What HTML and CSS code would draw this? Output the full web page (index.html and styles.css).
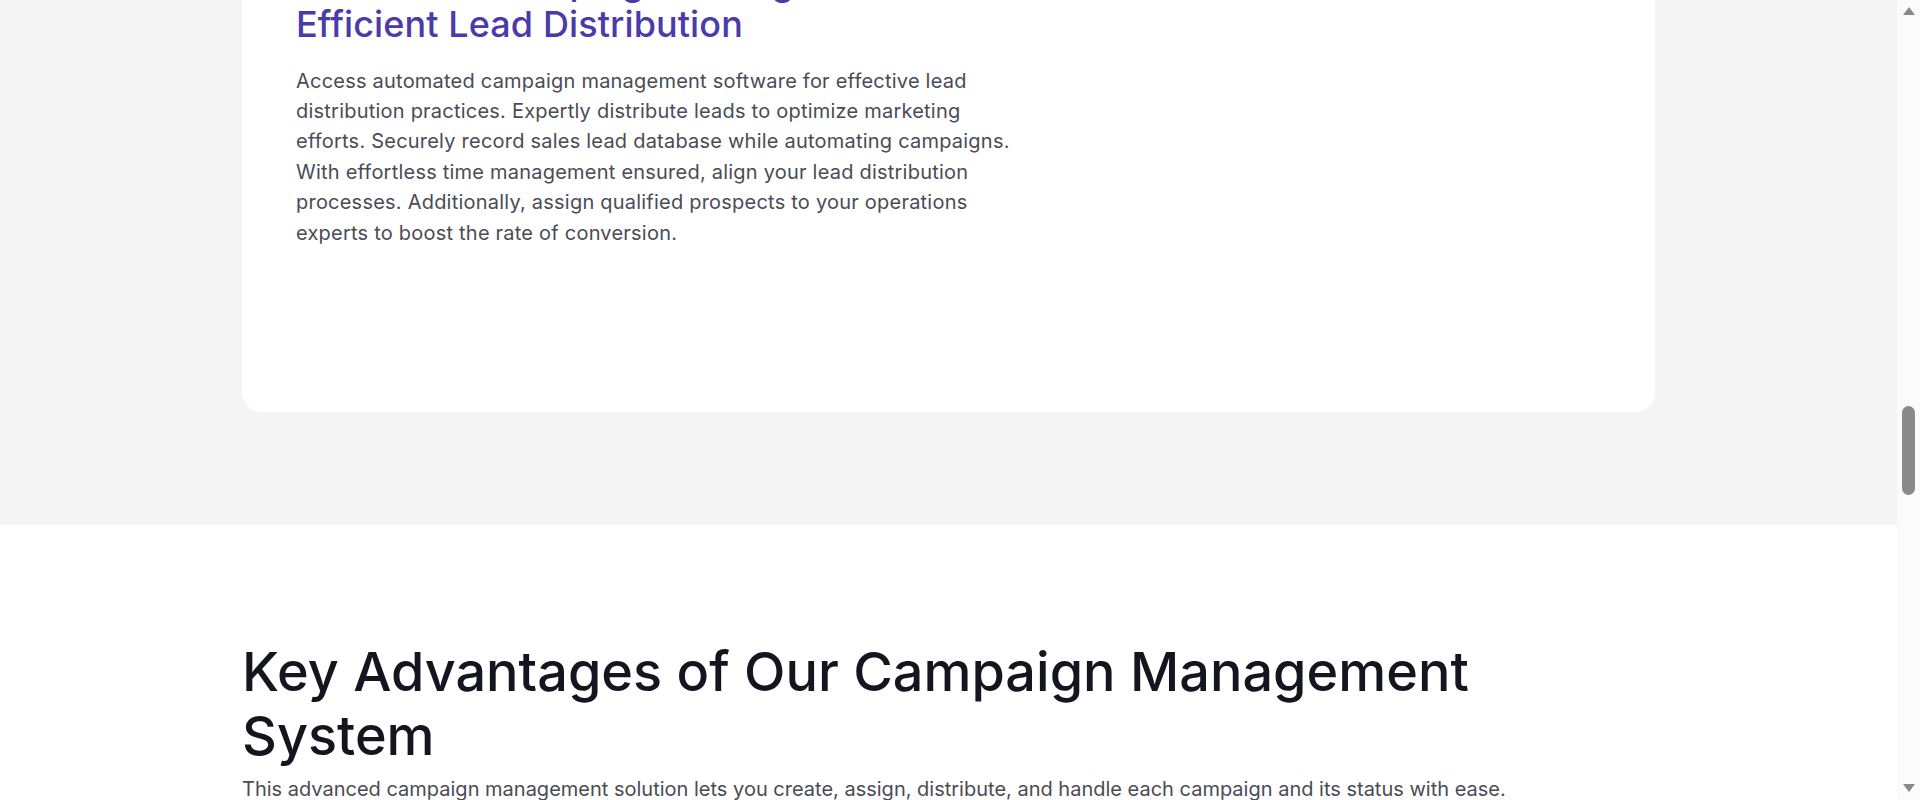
FILE: index.html
```html
<!DOCTYPE html>
<html lang="en">
<head>
<meta charset="utf-8">
<title>Campaign Management</title>
<link rel="stylesheet" href="styles.css">
</head>
<body>
<div class="window">
  <main class="page">
    <div class="scrolled">
      <section class="feature">
        <article class="card">
          <div class="card-text">
            <h2 class="card-title">Streamline Campaign Management for<br>Efficient Lead Distribution</h2>
            <p class="card-body">Access automated campaign management software for effective lead distribution practices. Expertly distribute leads to optimize marketing efforts. Securely record sales lead database while automating campaigns. With effortless time management ensured, align your lead distribution processes. Additionally, assign qualified prospects to your operations experts to boost the rate of conversion.</p>
          </div>
          <div class="card-media"></div>
        </article>
      </section>
      <section class="advantages">
        <div class="container">
          <h2 class="section-title">Key Advantages of Our Campaign Management System</h2>
          <p class="section-sub">This advanced campaign management solution lets you create, assign, distribute, and handle each campaign and its status with ease.</p>
        </div>
      </section>
    </div>
  </main>
  <div class="scrollbar" aria-hidden="true">
    <span class="arrow arrow-up"></span>
    <div class="track"><span class="thumb"></span></div>
    <span class="arrow arrow-down"></span>
  </div>
</div>
</body>
</html>
```
FILE: styles.css
```css
* { box-sizing: border-box; }
html, body { margin: 0; padding: 0; }
body {
  font-family: "Inter", "Liberation Sans", sans-serif;
  background: #ffffff;
  color: #16161f;
}
.window {
  display: flex;
  height: 800px;
  overflow: hidden;
}
.page {
  flex: 1;
  min-width: 0;
  overflow: hidden;
  background: #ffffff;
}
.scrolled {
  margin-top: -139px;
}
.feature {
  background: #f4f4f4;
  padding: 40px 0 113px;
}
.card {
  width: 1413px;
  margin: 0 auto;
  background: #ffffff;
  border-radius: 20px;
  padding: 60px 54px 164px;
  display: grid;
  grid-template-columns: 728px 1fr;
}
.card-title {
  margin: 0;
  font-size: 36px;
  line-height: 42px;
  font-weight: 500;
  color: #4a3aaa;
  letter-spacing: 0.1px;
}
.card-body {
  margin: 20.5px 0 0;
  font-size: 20px;
  line-height: 30.4px;
  color: #4b4b55;
  font-weight: 400;
  letter-spacing: 0.22px;
}
.advantages {
  background: #ffffff;
  padding-top: 115px;
}
.container {
  width: 1413px;
  margin: 0 auto;
}
.section-title {
  margin: 0;
  font-size: 54px;
  line-height: 64px;
  font-weight: 500;
  color: #15151f;
  max-width: 1300px;
}
.section-sub {
  margin: 6px 0 0;
  font-size: 20px;
  line-height: 30px;
  color: #4b4b55;
}
.scrollbar {
  width: 23px;
  flex: none;
  background: #fbfbfb;
  display: flex;
  flex-direction: column;
  align-items: center;
}
.arrow {
  width: 0;
  height: 0;
  border-left: 6.5px solid transparent;
  border-right: 6.5px solid transparent;
}
.arrow-up {
  margin-top: 7px;
  border-bottom: 8px solid #8a8a8a;
}
.arrow-down {
  margin-bottom: 8px;
  border-top: 8px solid #8a8a8a;
}
.track {
  flex: 1;
  display: flex;
  flex-direction: column;
  align-items: center;
}
.thumb {
  display: block;
  width: 13px;
  height: 89px;
  margin-top: 391px;
  border-radius: 7px;
  background: #8a8a8a;
}
```
